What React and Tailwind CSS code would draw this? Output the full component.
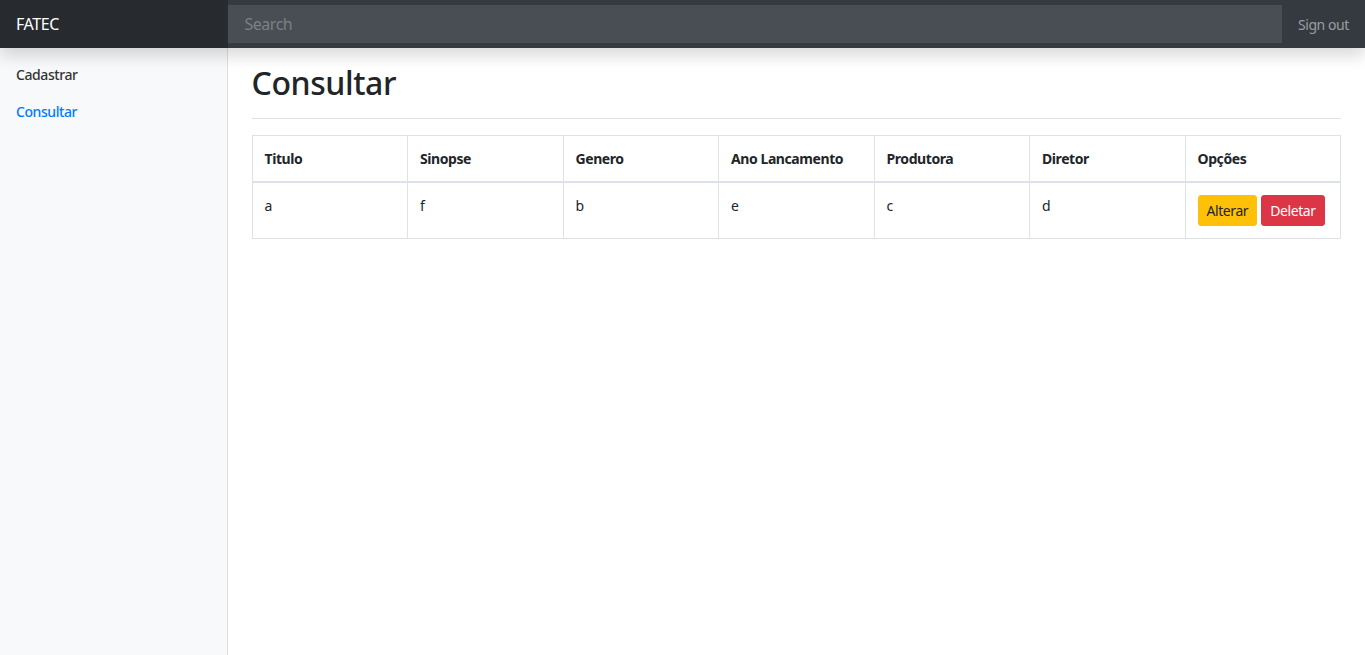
import React from 'react';

const filmes = [
  { titulo: 'a', sinopse: 'f', genero: 'b', ano: 'e', produtora: 'c', diretor: 'd' },
];

const colunas = ['Titulo', 'Sinopse', 'Genero', 'Ano Lancamento', 'Produtora', 'Diretor', 'Opções'];

const App = () => {
  return (
    <div className="min-h-screen bg-white text-[14px] leading-[1.5] tracking-[-0.03em] text-[#212529] font-['Segoe_UI','Noto_Sans',sans-serif] flex flex-col">
      <nav className="relative z-10 flex h-12 items-center bg-[#343a40] shadow-[0_8px_16px_rgba(0,0,0,0.15)]">
        <a className="flex h-12 w-[227.5px] shrink-0 items-center bg-[#272b30] px-4 text-[16px] text-white">FATEC</a>
        <input
          type="text"
          placeholder="Search"
          className="h-[38px] flex-1 border border-[#484e53] bg-[#484e53] px-4 text-[16px] tracking-[-0.03em] text-white outline-none placeholder:text-[#7b8186]"
        />
        <ul className="flex px-4">
          <li className="whitespace-nowrap">
            <a className="block py-2 text-[rgba(255,255,255,0.5)]">Sign out</a>
          </li>
        </ul>
      </nav>

      <div className="flex flex-1">
        <aside className="w-[227.5px] shrink-0 bg-[#f8f9fa] pt-2 shadow-[inset_-1px_0_0_rgba(0,0,0,0.1)]">
          <ul>
            <li>
              <a className="block px-4 py-2 font-medium text-[#333]">Cadastrar</a>
            </li>
            <li>
              <a className="block px-4 py-2 font-medium text-[#007bff]">Consultar</a>
            </li>
          </ul>
        </aside>

        <main className="flex-1 px-6">
          <div className="mb-4 flex border-b border-[#dee2e6] pt-4 pb-2">
            <h1 className="mb-2 text-[32px] font-medium leading-[1.2]">Consultar</h1>
          </div>

          <table className="w-full table-fixed border-collapse border border-[#dee2e6]">
            <thead>
              <tr>
                {colunas.map((c) => (
                  <th key={c} className="border border-b-2 border-[#dee2e6] p-3 text-left font-bold align-bottom">
                    {c}
                  </th>
                ))}
              </tr>
            </thead>
            <tbody>
              {filmes.map((f, i) => (
                <tr key={i}>
                  <td className="border border-[#dee2e6] p-3 align-top">{f.titulo}</td>
                  <td className="border border-[#dee2e6] p-3 align-top">{f.sinopse}</td>
                  <td className="border border-[#dee2e6] p-3 align-top">{f.genero}</td>
                  <td className="border border-[#dee2e6] p-3 align-top">{f.ano}</td>
                  <td className="border border-[#dee2e6] p-3 align-top">{f.produtora}</td>
                  <td className="border border-[#dee2e6] p-3 align-top">{f.diretor}</td>
                  <td className="border border-[#dee2e6] p-3 align-top">
                    <div className="flex gap-1">
                      <button className="rounded-[3px] border border-[#ffc107] bg-[#ffc107] px-2 py-1 text-[14px] leading-[1.5] tracking-[-0.03em] text-[#212529]">
                        Alterar
                      </button>
                      <button className="rounded-[3px] border border-[#dc3545] bg-[#dc3545] px-2 py-1 text-[14px] leading-[1.5] tracking-[-0.03em] text-white">
                        Deletar
                      </button>
                    </div>
                  </td>
                </tr>
              ))}
            </tbody>
          </table>
        </main>
      </div>
    </div>
  );
};

export default App;
